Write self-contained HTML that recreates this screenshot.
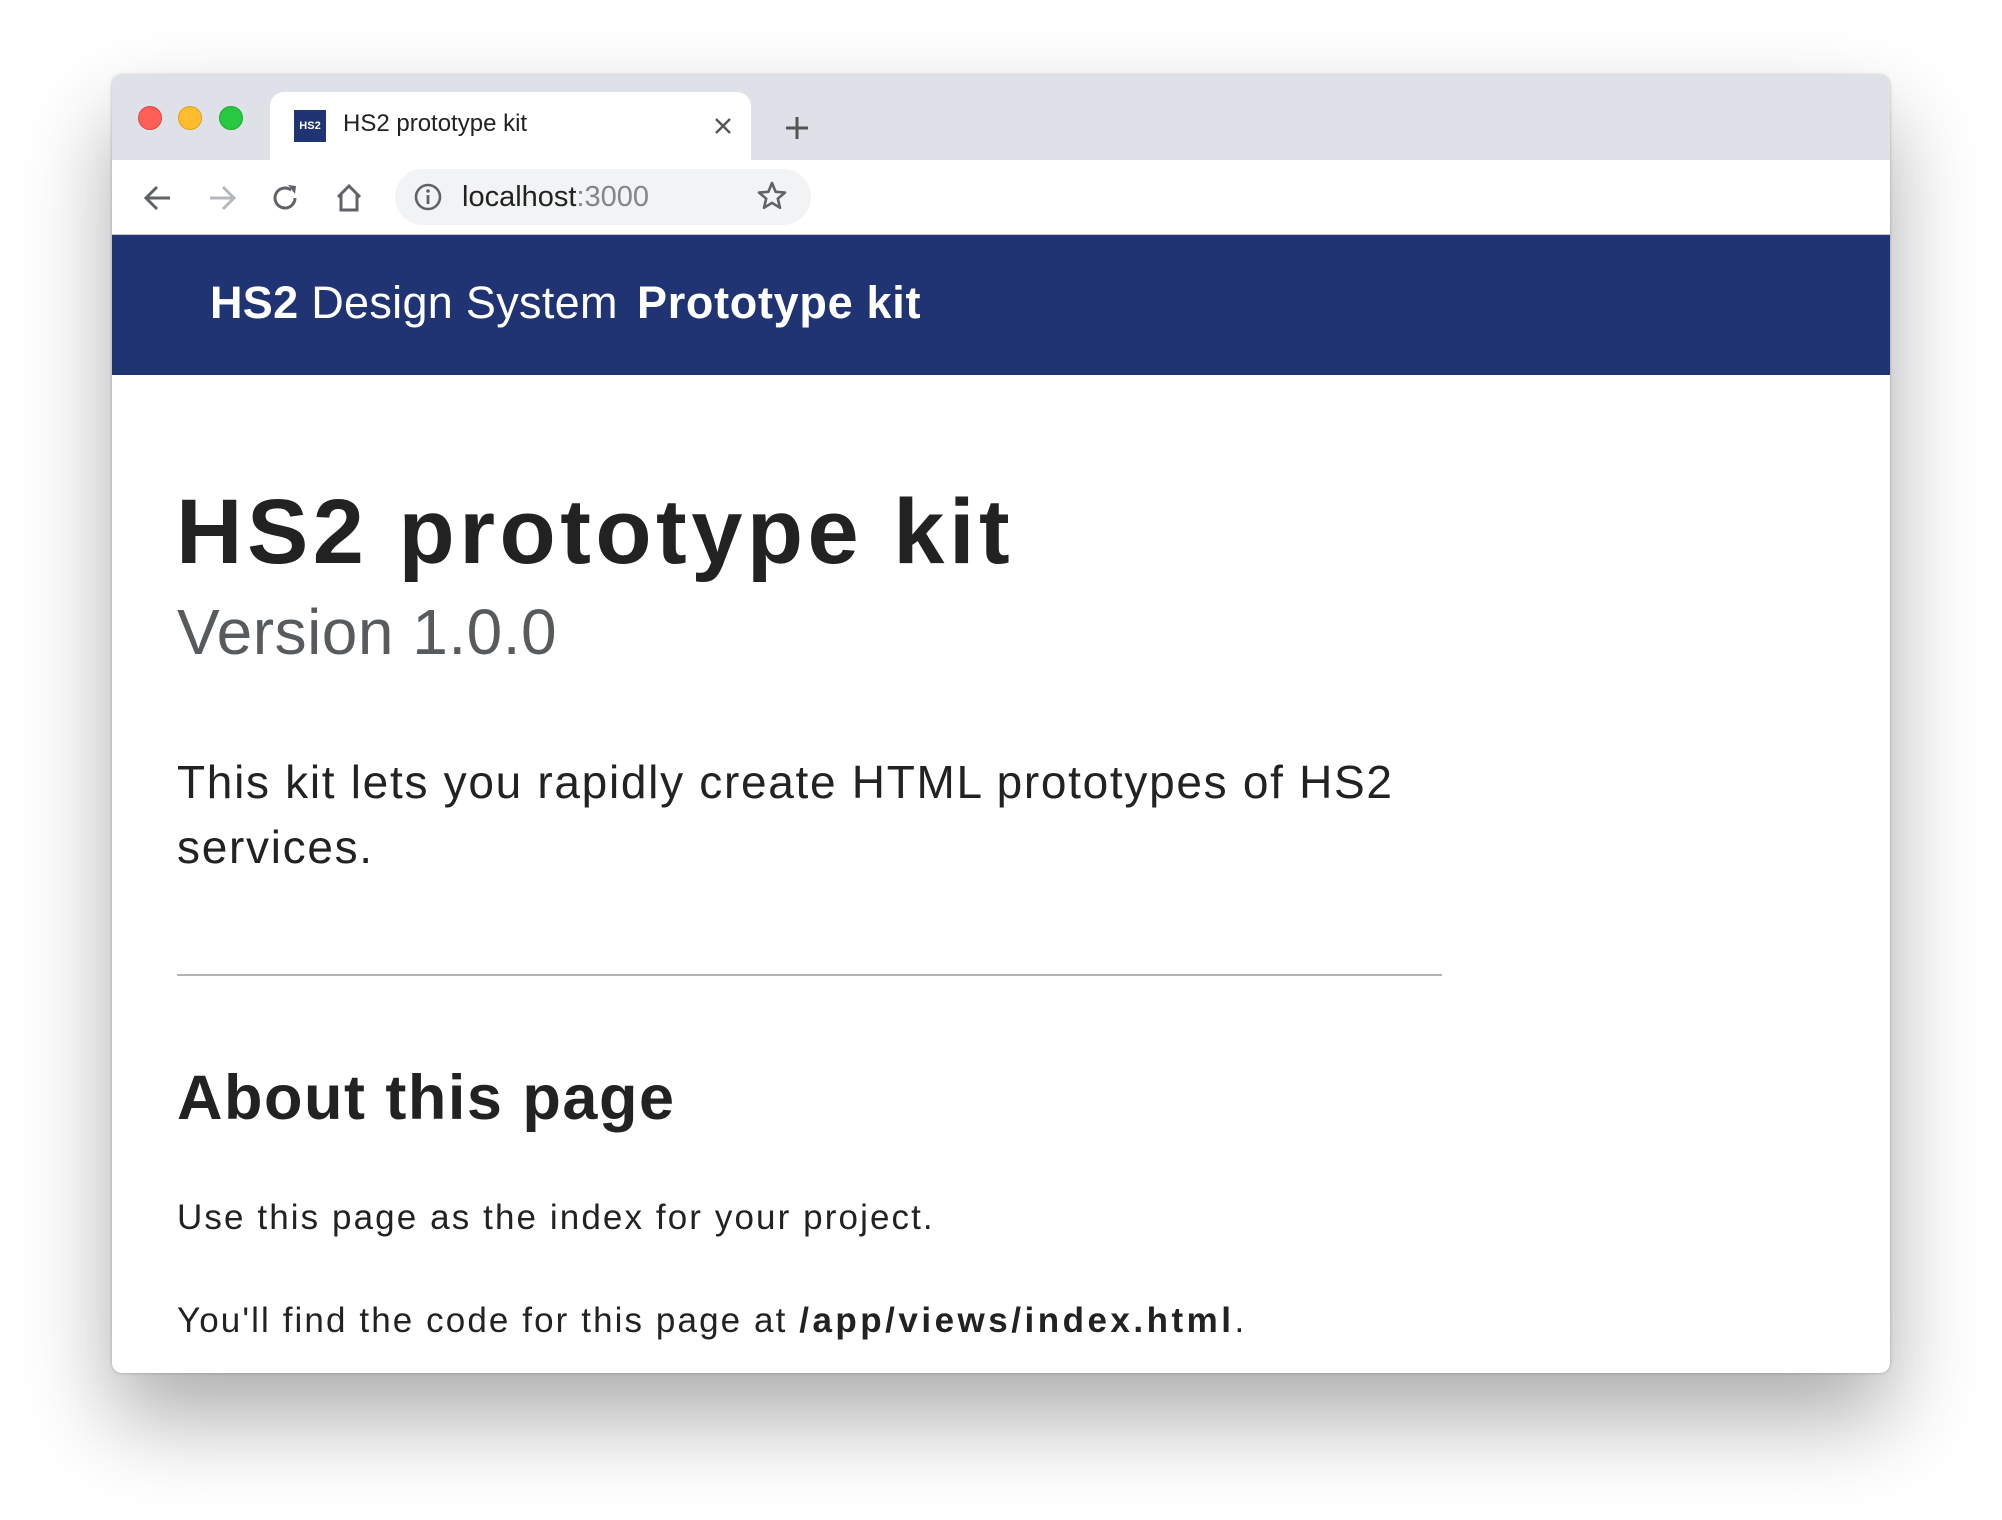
<!DOCTYPE html>
<html><head><meta charset="utf-8"><style>
*{margin:0;padding:0;box-sizing:border-box}
body{width:2002px;height:1520px;background:#fff;position:relative;overflow:hidden;font-family:"Liberation Sans",sans-serif;color:#222}
.win{position:absolute;left:112px;top:75px;width:1778px;height:1298px;border-radius:10px;background:#fff;box-shadow:0 45px 90px rgba(0,0,0,.33),0 0 3px rgba(0,0,0,.25);overflow:hidden}
.tabs{position:absolute;left:0;top:0;width:100%;height:85px;background:#dee1e7}
.dot{position:absolute;top:31px;width:24px;height:24px;border-radius:50%}
.tab{position:absolute;left:158px;top:17px;width:481px;height:70px;background:#fff;border-radius:14px 14px 0 0}
.abs{position:absolute;white-space:nowrap;line-height:1}
.tool{position:absolute;left:0;top:85px;width:100%;height:75px;background:#fff;border-bottom:1px solid #c8cacd}
.url{position:absolute;left:283px;top:9px;width:416px;height:56px;border-radius:28px;background:#f1f3f4}
.hdr{position:absolute;left:0;top:160px;width:100%;height:140px;background:#203474;color:#fff}
</style></head><body>
<div class="win">
 <div class="tabs">
  <div class="dot" style="left:26px;background:#fe5f57;border:1px solid #e0443e"></div>
  <div class="dot" style="left:66px;background:#febc2e;border:1px solid #dea123"></div>
  <div class="dot" style="left:107px;background:#28c840;border:1px solid #1aab29"></div>
  <div class="tab">
   <div style="position:absolute;left:24px;top:18px;width:32px;height:32px;background:#203474;color:#fff;font-size:11px;font-weight:bold;line-height:32px;text-align:center">HS2</div>
   <div class="abs" style="left:73px;top:20px;font-size:24px;color:#222">HS2 prototype kit</div>
   <svg style="position:absolute;left:442px;top:23px" width="22" height="22" viewBox="0 0 22 22"><path d="M4 4L18 18M18 4L4 18" stroke="#555" stroke-width="2.4"/></svg>
  </div>
  <svg style="position:absolute;left:671px;top:39px" width="28" height="28" viewBox="0 0 28 28"><path d="M14 3V25M3 14H25" stroke="#555" stroke-width="3"/></svg>
 </div>
 <div class="tool">
  <svg style="position:absolute;left:30px;top:22px" width="32" height="32" viewBox="0 0 32 32"><path d="M28 16H5M15 5L4 16L15 27" fill="none" stroke="#5f6368" stroke-width="3"/></svg>
  <svg style="position:absolute;left:94px;top:22px" width="32" height="32" viewBox="0 0 32 32"><path d="M4 16H27M17 5L28 16L17 27" fill="none" stroke="#b4b7bb" stroke-width="3"/></svg>
  <svg style="position:absolute;left:157px;top:22px" width="32" height="32" viewBox="0 0 32 32"><path d="M26 16A10 10 0 1 1 22 8" fill="none" stroke="#5f6368" stroke-width="3"/><path d="M19 3L27 4L26 12Z" fill="#5f6368"/></svg>
  <svg style="position:absolute;left:221px;top:22px" width="32" height="32" viewBox="0 0 32 32"><path d="M5 15L16 4L27 15M8 13V28H24V13" fill="none" stroke="#5f6368" stroke-width="3"/></svg>
  <div class="url">
   <svg style="position:absolute;left:18px;top:13px" width="30" height="30" viewBox="0 0 30 30"><circle cx="15" cy="15" r="12" fill="none" stroke="#5f6368" stroke-width="2.6"/><path d="M15 13V22" stroke="#5f6368" stroke-width="2.8"/><circle cx="15" cy="9" r="1.8" fill="#5f6368"/></svg>
   <div class="abs" style="left:67px;top:14px;font-size:29px;color:#222">localhost<span style="color:#80868b">:3000</span></div>
   <svg style="position:absolute;left:361px;top:11px" width="32" height="32" viewBox="0 0 32 32"><path d="M16 3L19.6 11.8L29 12.5L21.8 18.6L24 27.8L16 22.8L8 27.8L10.2 18.6L3 12.5L12.4 11.8Z" fill="none" stroke="#5f6368" stroke-width="2.6" stroke-linejoin="round"/></svg>
  </div>
 </div>
 <div class="hdr">
  <div class="abs" style="left:98px;top:45px;font-size:45px;letter-spacing:0.3px"><b>HS2</b> Design System</div>
  <div class="abs" style="left:525px;top:45px;font-size:45px;font-weight:bold;letter-spacing:0.7px">Prototype kit</div>
 </div>
</div>
<div class="abs" style="left:176px;top:486px;font-size:92px;font-weight:bold;letter-spacing:4.5px;color:#222">HS2 prototype kit</div>
<div class="abs" style="left:177px;top:600px;font-size:64px;color:#585b5e;letter-spacing:0.5px">Version 1.0.0</div>
<div class="abs" style="left:177px;top:759px;font-size:46px;color:#222;letter-spacing:1.7px">This kit lets you rapidly create HTML prototypes of HS2</div>
<div class="abs" style="left:177px;top:824px;font-size:46px;color:#222;letter-spacing:1.7px">services.</div>
<div style="position:absolute;left:177px;top:974px;width:1265px;height:2px;background:#b1b4b6"></div>
<div class="abs" style="left:177px;top:1067px;font-size:63px;font-weight:bold;color:#222;letter-spacing:1.5px">About this page</div>
<div class="abs" style="left:177px;top:1200px;font-size:35px;color:#222;letter-spacing:2.1px">Use this page as the index for your project.</div>
<div class="abs" style="left:177px;top:1303px;font-size:35px;color:#222;letter-spacing:2.1px">You'll find the code for this page at <b style="letter-spacing:3.5px">/app/views/index.html</b>.</div>
</body></html>
